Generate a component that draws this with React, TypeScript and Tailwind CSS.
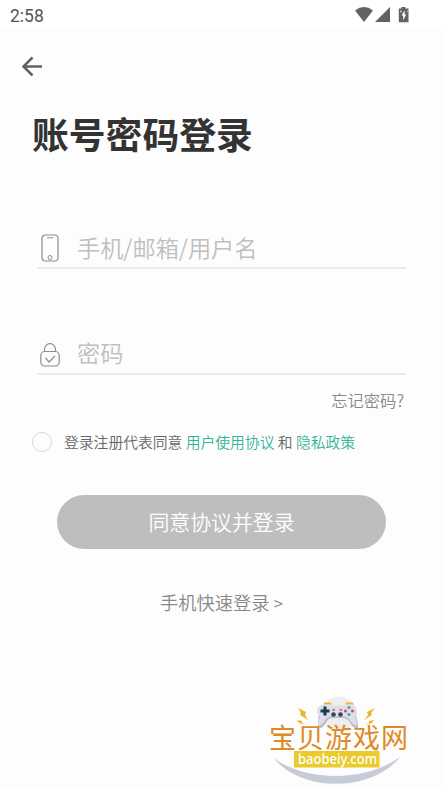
const cjk = "font-['Noto_Sans_CJK_SC',sans-serif]";

const StatusBar = () => (
  <div className="h-[29px] shrink-0 bg-white flex items-center justify-between pl-[10px] pr-[34px]">
    <span className="font-[Roboto,sans-serif] text-[17.500px] leading-[29px] text-[#555] pt-[3px]">2:58</span>
    <svg width="54" height="16" viewBox="0 0 54 16" fill="#626262" className="shrink-0">
      <path d="M0 3.400Q9-3.200 18 3.400L9 15z" />
      <path d="M35 0v15H20z" />
      <path d="M46.400 0h4v1.500H53.500V15.200H43.800V1.500h2.600z" />
      <path d="M49.600 3.300l-3 5.200h1.600v4.700l3-5.700h-1.600zM45.300 3l1.500 1.500-1 1.500zM51.500 3l1 1v2z" fill="#fff" />
    </svg>
  </div>
);

const PhoneIcon = () => (
  <svg width="18" height="28" viewBox="0 0 18 28" fill="none" stroke="#8e8e8e">
    <rect x="1" y="1" width="16" height="26" rx="3.500" strokeWidth="1.200" />
    <path d="M6 3.800h6" />
    <circle cx="9" cy="23.500" r="2" />
  </svg>
);

const LockIcon = () => (
  <svg width="20" height="24" viewBox="0 0 20 24" fill="none" stroke="#8e8e8e" strokeWidth="1.200">
    <path d="M4.500 8.500V6.200a5.500 5.500 0 0 1 11 0v2.300" />
    <rect x="0.800" y="8.500" width="18.400" height="14.500" rx="4" />
    <path d="M5.500 15l3.500 4 6-6" />
  </svg>
);

const SiteLogo = () => (
  <svg width="144" height="93" viewBox="0 0 144 93" className="block">
    <circle cx="71" cy="18" r="17.500" fill="#eeeeef" />
    <g fill="#edb52b">
      <path d="M30 12l8 4-1 3 3 5-8-5 1-2z" />
      <path d="M29 24l5 1v2l4 2-7-2z" />
      <path d="M107 12l-8 4 1 3-4 5 8-5-1-2z" />
      <path d="M106 24l-5 1v2l-4 2 7-2z" />
      <path d="M55 8.500l1.500-2h6l1.500 2zM77 8.500l1.500-2h6l1.500 2z" />
    </g>
    <path d="M51 18h36c2 4 3 9 3 14-3 1-5-1-7-4-2-4-5-6-8-6H64c-3 0-5 2-7 6-2 3-4 5-7 4 0-5 0-10 1-14z" fill="#b8bac9" />
    <path d="M56 8.500c3 0 4 1 6 1h14c2 0 3-1 6-1 4 0 7 3 7 7 0 2-1 4-2 5 1 3 2 6 2 9-3 0-5-2-7-5-2-3-4-4-7-4H64c-3 0-5 1-7 4-2 3-4 5-7 5 0-3 1-6 2-9-2-1-3-3-3-5 0-4 3-7 7-7z" fill="#dedfe8" />
    <path d="M55.500 10.500h3v3h3v3h-3v3h-3v-3h-3v-3h3z" fill="#173b4d" />
    <circle cx="81" cy="11.500" r="1.600" fill="#38a8b8" />
    <circle cx="81" cy="18.500" r="1.600" fill="#38a8b8" />
    <circle cx="77.500" cy="15" r="1.600" fill="#d94b60" />
    <circle cx="84.500" cy="15" r="1.600" fill="#d94b60" />
    <circle cx="65.500" cy="18.500" r="2.300" fill="#32475b" />
    <circle cx="72.500" cy="18.500" r="2.300" fill="#32475b" />
    <path d="M64.500 14h2.500M71.500 14h2.500" stroke="#d94b60" strokeWidth="1.500" />
    <path d="M5.500 62C38 86 98 86 132 61 105 96 33 97 5.500 62z" fill="#c7cad7" />
    <text x="1" y="51.500" fontSize="27" letterSpacing="1" fill="#df8a27" className="font-['Noto_Sans_CJK_SC',sans-serif] font-normal">宝贝游戏网</text>
    <rect x="26" y="55" width="85.500" height="16.500" fill="#e9cb2d" />
    <text x="30" y="67.500" fontSize="15" textLength="79" lengthAdjust="spacingAndGlyphs" fill="#fff" className="font-['Noto_Sans',sans-serif] font-medium">baobeiy.com</text>
  </svg>
);

const App = () => {
  return (
    <div className={`w-[443px] h-[788px] overflow-hidden bg-[#fdfdfd] flex flex-col ${cjk}`}>
      <StatusBar />

      <button className="ml-[22px] mt-[27px] w-5 h-5 shrink-0">
        <svg width="20" height="20" viewBox="0 0 20 20" fill="none" stroke="#626262" strokeWidth="2.500">
          <path d="M20 10.500H2M10.500 1.500l-9 9 9 9" />
        </svg>
      </button>

      <h1 className="ml-8 mt-[30px] text-[36.800px] leading-[54px] font-bold text-[#333] whitespace-nowrap">账号密码登录</h1>

      <div className="mx-[37px] mt-[68px] h-[41px] shrink-0 border-b-2 border-[#ebebeb] flex items-center">
        <div className="w-[40px] pl-[4px]"><PhoneIcon /></div>
        <span className="pb-px text-[23.200px] leading-[36px] text-[#bfbfbf] font-[350]">手机/邮箱/用户名</span>
      </div>

      <div className="mx-[37px] mt-[65px] h-[41px] shrink-0 border-b-2 border-[#ebebeb] flex items-center">
        <div className="w-[40px] pl-[3px] pt-[2px]"><LockIcon /></div>
        <span className="pb-[2px] text-[23.200px] leading-[35px] text-[#bfbfbf] font-[350]">密码</span>
      </div>

      <a className="self-end mr-[39px] mt-[13px] text-[16.300px] leading-6 font-[350] text-[#888]">忘记密码?</a>

      <div className="ml-8 mt-[17.500px] h-6 shrink-0 flex items-center whitespace-nowrap">
        <span className="w-5 h-5 rounded-full border border-[#d8d8d8]" />
        <p className="ml-3 text-[14.800px] leading-6 font-[350] text-[#666]">
          登录注册代表同意 <a className="text-[#35b597]">用户使用协议</a> 和 <a className="text-[#35b597]">隐私政策</a>
        </p>
      </div>

      <button className="ml-[57px] mt-[41.500px] w-[329px] h-[54px] shrink-0 rounded-full bg-[#bebebe] text-[20.900px] font-[350] text-white">
        同意协议并登录
      </button>

      <a className="self-center mt-[39px] text-[18.300px] leading-7 font-[350] text-[#888]">
        手机快速登录 <span className="text-[17px]">&gt;</span>
      </a>

      <div className="ml-[268px] mt-[79px] shrink-0">
        <SiteLogo />
      </div>
    </div>
  );
};

export default App;
